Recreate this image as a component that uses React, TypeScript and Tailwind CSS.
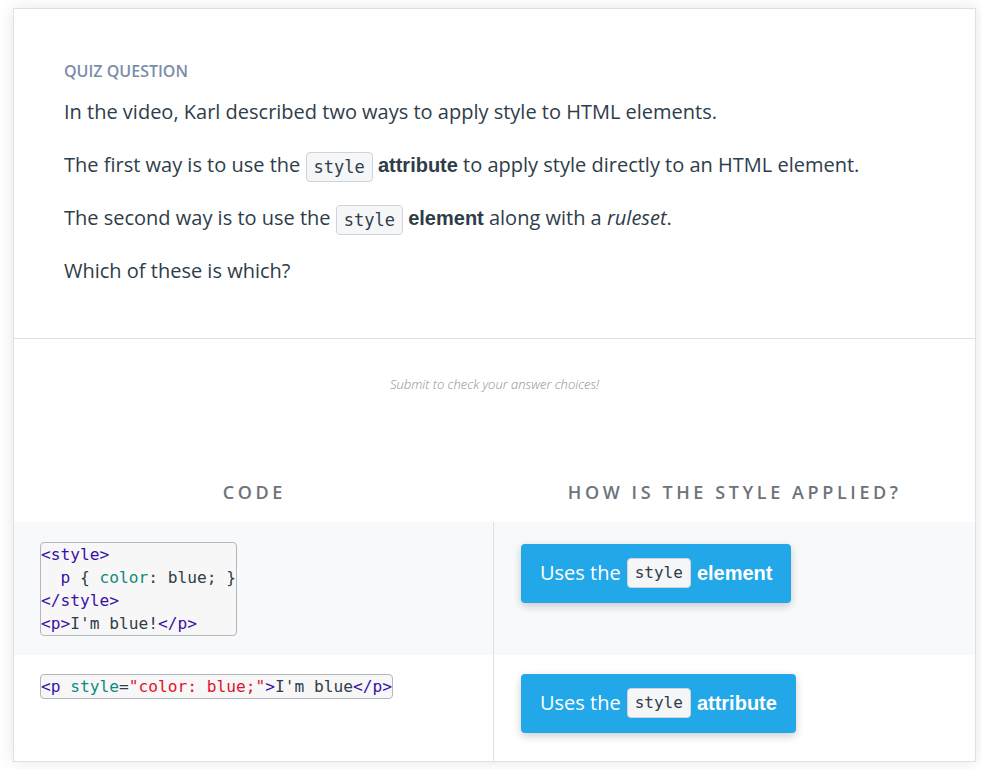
import React from "react";

const Chip = ({ children, size }: { children: React.ReactNode; size: "lg" | "sm" }) => (
  <code
    className={
      "inline-block align-middle -my-[2px] rounded-[4px] border border-[#cfd4da] bg-[#f5f6f7] px-[7px] leading-[28px] text-[#2e3d49] font-['DejaVu_Sans_Mono',monospace] " +
      (size === "lg" ? "text-[17px]" : "text-[16px]")
    }
  >
    {children}
  </code>
);

const Answer = ({ word }: { word: string }) => (
  <div className="inline-flex h-[59px] items-center gap-[6px] rounded-[4px] bg-[#22a7e9] px-[19px] text-[20px] text-white shadow-[0_3px_8px_rgba(0,0,0,0.2)]">
    <span className="font-['Open_Sans',sans-serif]">Uses the</span>
    <Chip size="sm">style</Chip>
    <span className="font-['Liberation_Sans',sans-serif] font-bold">{word}</span>
  </div>
);

const tag = "text-[#3b0fa8]";
const attr = "text-[#0f8a80]";
const str = "text-[#e0132a]";

export default function App() {
  return (
    <div className="min-h-screen bg-white pt-[8px] pl-[13px] pr-[5px] font-['Open_Sans',sans-serif]">
      <div className="w-[963px] border border-[#dbe1e8] bg-white shadow-[0_0_16px_rgba(0,0,0,0.1)]">
        {/* question */}
        <div className="px-[50px] pt-[50px] pb-[51px] text-[#2e3d49]">
          <div className="mb-[12px] text-[16px] font-semibold uppercase text-[#7c8daa]">Quiz Question</div>
          <p className="text-[20px] leading-[33px]">In the video, Karl described two ways to apply style to HTML elements.</p>
          <p className="mt-[20px] text-[20px] leading-[33px]">
            The first way is to use the <Chip size="lg">style</Chip>{" "}
            <b className="font-['Liberation_Sans',sans-serif] font-bold">attribute</b> to apply style directly to an HTML element.
          </p>
          <p className="mt-[19px] text-[20px] leading-[33px]">
            The second way is to use the <Chip size="lg">style</Chip>{" "}
            <b className="font-['Liberation_Sans',sans-serif] font-bold">element</b> along with a <i>ruleset</i>.
          </p>
          <p className="mt-[19px] text-[20px] leading-[33px]">Which of these is which?</p>
        </div>

        <div className="border-t border-[#dbe1e8] pt-[36px] pb-[84px] text-center text-[13px] italic font-light text-[#8a9099]">
          Submit to check your answer choices!
        </div>

        {/* table */}
        <div className="grid grid-cols-2 pb-[14px] text-center text-[18px] font-semibold uppercase tracking-[3.6px] text-[#6d737a]">
          <div>Code</div>
          <div>How is the style applied?</div>
        </div>
        <div className="mt-[2px] grid grid-cols-[480px_1fr]">
          <div className="border-r border-[#dbe1e8] bg-[#f8f9fb] px-[26px] pt-[20px] pb-[19px]">
            <pre className="inline-block rounded-[4px] border border-[#b3b6bc] bg-[#f7f7f7] text-[16.2px] leading-[23px] text-[#2e3d49] font-['DejaVu_Sans_Mono',monospace]">
              <span className={tag}>&lt;style&gt;</span>
              {"\n  "}
              <span className={tag}>p</span> {"{ "}
              <span className={attr}>color</span>: blue; {"}"}
              {"\n"}
              <span className={tag}>&lt;/style&gt;</span>
              {"\n"}
              <span className={tag}>&lt;p&gt;</span>I'm blue!<span className={tag}>&lt;/p&gt;</span>
            </pre>
          </div>
          <div className="bg-[#f8f9fb] px-[27px] pt-[22px]">
            <Answer word="element" />
          </div>
          <div className="border-r border-[#dbe1e8] px-[26px] pt-[19px] pb-[28px]">
            <pre className="inline-block rounded-[4px] border border-[#b3b6bc] bg-[#f7f7f7] text-[16.2px] leading-[23px] text-[#2e3d49] font-['DejaVu_Sans_Mono',monospace]">
              <span className={tag}>&lt;p</span> <span className={attr}>style</span>=
              <span className={str}>"color: blue;"</span>
              <span className={tag}>&gt;</span>I'm blue<span className={tag}>&lt;/p&gt;</span>
            </pre>
          </div>
          <div className="px-[27px] pt-[19px] pb-[28px]">
            <Answer word="attribute" />
          </div>
        </div>
      </div>
    </div>
  );
}
